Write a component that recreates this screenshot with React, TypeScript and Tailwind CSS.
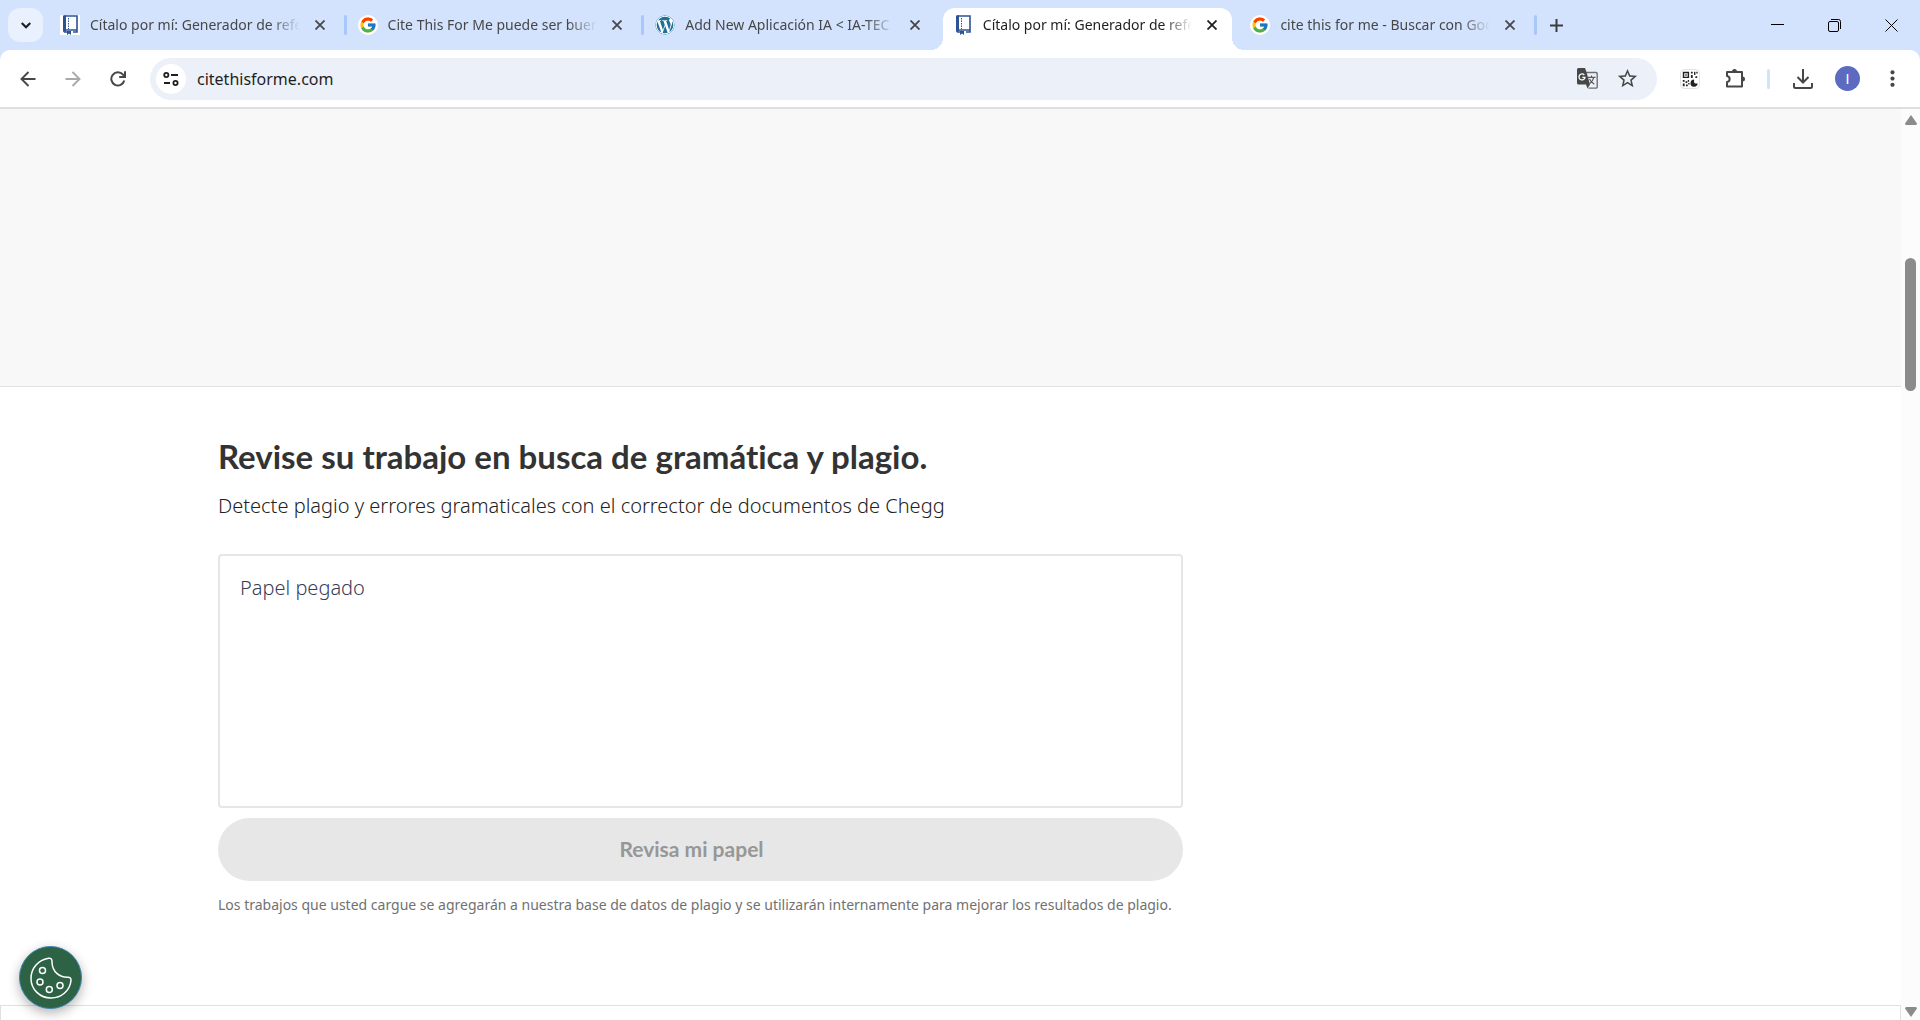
import type { ReactNode } from "react";
import { FaWordpress } from "react-icons/fa";
import { FcGoogle } from "react-icons/fc";
import { MdMoreVert, MdStarOutline } from "react-icons/md";

type Favicon = "book" | "google" | "wordpress";

interface Tab {
  title: string;
  icon: Favicon;
  active?: boolean;
  divider?: boolean;
}

const tabs: Tab[] = [
  { title: "Cítalo por mí: Generador de refe", icon: "book", divider: true },
  { title: "Cite This For Me puede ser buen", icon: "google", divider: true },
  { title: "Add New Aplicación IA < IA-TEC", icon: "wordpress" },
  { title: "Cítalo por mí: Generador de refe", icon: "book", active: true },
  { title: "cite this for me - Buscar con Goo", icon: "google", divider: true },
];

function BookIcon() {
  return (
    <svg viewBox="0 0 20 20" className="size-5">
      <rect width="20" height="20" fill="#fff" />
      <path d="M4 1h13v16h-4M8 17H4.500a1.500 1.500 0 0 1 0-2H17" fill="none" stroke="#2c5494" strokeWidth="1.600" />
      <rect x="3" y="0.500" width="3" height="16" fill="#2c5494" />
      <path d="M8.500 3v11" stroke="#2c5494" strokeWidth="1" strokeDasharray="1.500 1" />
      <path d="M7 16h4v4l-2-1.500L7 20z" fill="#2c5494" />
    </svg>
  );
}

function TabIcon({ icon }: { icon: Favicon }) {
  if (icon === "book") return <BookIcon />;
  if (icon === "wordpress") return <FaWordpress className="size-5 rounded-full bg-white text-[#1d7199]" />;
  return (
    <span className="flex size-5 items-center justify-center rounded-full bg-white">
      <FcGoogle className="size-[18px]" />
    </span>
  );
}

function CloseIcon() {
  return (
    <svg viewBox="0 0 10 10" className="size-[10px]" fill="none" stroke="currentColor" strokeWidth="1.800">
      <path d="M0.500 0.500l9 9M9.500 0.500l-9 9" />
    </svg>
  );
}

function BrowserTab({ tab }: { tab: Tab }) {
  return (
    <div className="flex h-[42px] min-w-0 flex-1 items-center">
      <div
        className={
          tab.active
            ? "relative flex h-full min-w-0 flex-1 items-center rounded-t-xl bg-white px-[10px] pb-2 text-[#1f1f1f]"
            : "flex h-full min-w-0 flex-1 items-center px-[10px] pb-2 text-[#474747]"
        }
      >
        {tab.active && (
          <>
            <span className="absolute bottom-0 -left-3 size-3 bg-[radial-gradient(circle_at_0_0,transparent_12px,white_12px)]" />
            <span className="absolute -right-3 bottom-0 size-3 bg-[radial-gradient(circle_at_100%_0,transparent_12px,white_12px)]" />
          </>
        )}
        <span className="shrink-0">
          <TabIcon icon={tab.icon} />
        </span>
        <span className="ml-[10px] min-w-0 flex-1 overflow-hidden text-[14px] leading-[22px] whitespace-nowrap [mask-image:linear-gradient(to_right,black_86%,transparent)]">
          {tab.title}
        </span>
        <button type="button" aria-label="Cerrar pestaña" className="ml-[10px] flex size-5 items-center justify-center">
          <CloseIcon />
        </button>
      </div>
      <span
        className={tab.divider ? "mr-px mb-2 ml-1 h-5 w-[3px] rounded-full bg-[#a8c7fa]" : "mr-px ml-1 w-[3px]"}
      />
    </div>
  );
}

function WindowButton({ label, children }: { label: string; children: ReactNode }) {
  return (
    <button type="button" aria-label={label} className="flex h-full w-[57px] items-center justify-center text-black">
      <svg viewBox="0 0 13 13" className="size-[13px]" fill="none" stroke="currentColor">
        {children}
      </svg>
    </button>
  );
}

function TabStrip() {
  return (
    <div className="flex h-[50px] items-center bg-[#d3e3fd]">
      <button
        type="button"
        aria-label="Buscar pestañas"
        className="ml-2 flex h-[34px] w-[35px] shrink-0 items-center justify-center rounded-xl bg-[#e9f0fe]"
      >
        <svg viewBox="0 0 10 7" className="h-[7px] w-[10px]" fill="none" stroke="#1f1f1f" strokeWidth="2.200">
          <path d="M0.700 1L5 5.300 9.300 1" />
        </svg>
      </button>
      <div className="ml-[7px] flex w-[1488px] min-w-0 pt-2">
        {tabs.map((tab, i) => (
          <BrowserTab key={i} tab={tab} />
        ))}
      </div>
      <button type="button" aria-label="Nueva pestaña" className="ml-2 flex size-5 shrink-0 items-center justify-center">
        <svg viewBox="0 0 13 13" className="size-[13px]" stroke="#3c3c3c" strokeWidth="2">
          <path d="M6.500 0v13M0 6.500h13" />
        </svg>
      </button>
      <div className="ml-auto flex h-full shrink-0">
        <WindowButton label="Minimizar">
          <path d="M0 5.500h13" />
        </WindowButton>
        <WindowButton label="Restaurar">
          <rect x="0.500" y="2.500" width="10" height="10" rx="1.500" />
          <path d="M3 0.500h7.500a2 2 0 0 1 2 2V10" />
        </WindowButton>
        <WindowButton label="Cerrar">
          <path d="M0.500 0.500l12 12M12.500 0.500l-12 12" />
        </WindowButton>
      </div>
    </div>
  );
}

function TranslateIcon() {
  return (
    <svg viewBox="0 0 21 21" className="size-[21px]" fill="none">
      <path d="M9 4.500h10a1.200 1.200 0 0 1 1.200 1.200v13.200a1.200 1.200 0 0 1-1.200 1.200h-7.500" stroke="#6f6f6f" strokeWidth="1.400" />
      <path d="M1.500 0H8l1.300 3.500L13 16.500 10.500 20.500 9 16.500H1.500A1.500 1.500 0 0 1 0 15V1.500A1.500 1.500 0 0 1 1.500 0z" fill="#474747" />
      <path d="M7.300 7A3 3 0 1 0 8 9.300H5.300" stroke="#fff" strokeWidth="1.300" />
      <path d="M11 9.300h7.500M14.500 7.500v1.800M16.800 9.300q-1 4-4.300 6.500M12.500 11q1.500 3 4.800 5.300" stroke="#5a5a5a" strokeWidth="1.200" />
    </svg>
  );
}

function ToolButton({ label, children }: { label: string; children: ReactNode }) {
  return (
    <button
      type="button"
      aria-label={label}
      className="flex size-[35px] shrink-0 items-center justify-center text-[#474747]"
    >
      {children}
    </button>
  );
}

function Toolbar() {
  return (
    <div className="bg-[#d3e3fd]">
      <div className="flex h-[59px] items-center gap-[10px] rounded-t-[10px] border-b-2 border-[#dedede] bg-white px-[10px]">
        <ToolButton label="Atrás">
          <svg viewBox="0 0 16 16" className="size-4" fill="none" stroke="currentColor" strokeWidth="1.900">
            <path d="M15.500 8H1.500M8.500 1L1.500 8l7 7" />
          </svg>
        </ToolButton>
        <ToolButton label="Adelante">
          <svg viewBox="0 0 16 16" className="size-4" fill="none" stroke="#a9a9a9" strokeWidth="1.900">
            <path d="M0.500 8h14M7.500 1l7 7-7 7" />
          </svg>
        </ToolButton>
        <ToolButton label="Volver a cargar">
          <svg viewBox="0 0 16 16" className="size-4" fill="none" stroke="currentColor" strokeWidth="2">
            <path d="M14.300 9.500A6.600 6.600 0 1 1 13 3.700L14.500 5.500" />
            <path d="M15 0.300V6H9.200" />
          </svg>
        </ToolButton>

        <div className="mx-[5px] flex h-[42px] min-w-0 flex-1 items-center rounded-full bg-[#ecf0f9] px-[6px]">
          <button
            type="button"
            aria-label="Información del sitio"
            className="flex size-[30px] shrink-0 items-center justify-center rounded-full bg-white"
          >
            <svg viewBox="0 0 16 14" className="h-[14px] w-4" fill="none" stroke="#1f1f1f" strokeWidth="1.800">
              <circle cx="3.300" cy="3" r="2.100" />
              <path d="M8 3h7M1 11h6" />
              <circle cx="12.500" cy="11" r="2.100" />
            </svg>
          </button>
          <input
            type="text"
            aria-label="Dirección"
            defaultValue="citethisforme.com"
            className="ml-[11px] min-w-0 flex-1 bg-transparent text-[16px] leading-6 text-[#1f1f1f] outline-none"
          />
          <button type="button" aria-label="Traducir" className="flex w-[35px] justify-center">
            <TranslateIcon />
          </button>
          <button type="button" aria-label="Favoritos" className="mr-[6px] ml-[5px] flex w-[35px] justify-center text-[#474747]">
            <MdStarOutline className="size-[23px]" />
          </button>
        </div>

        <ToolButton label="Código QR">
          <svg viewBox="0 0 20 20" className="size-5 rounded-sm border border-[#e4e4e4] bg-white" fill="#222">
            <path fillRule="evenodd" d="M2 2h7v7H2zM3.600 3.600v3.800h3.800V3.600z" />
            <path d="M4.800 4.800h1.500v1.500H4.800zM11 2h2v2h-2zM11 5.500h2V9h-2zM14.500 2H16v3.500h-1.500zM17 2h1.500v2H17zM16 7h2v2h-2zM2 11h2v2H2zM5 12.500h2v2H5zM7.500 11H9v2H7.500zM2 15h2v3H2zM5.500 16h2v2h-2zM8 14.500h1.500V16H8z" />
            <path d="M14.500 10.500a4 4 0 1 0 4 4.500h-2.500a2 2 0 0 1-1.500-2z" />
          </svg>
        </ToolButton>
        <ToolButton label="Extensiones">
          <svg viewBox="0 0 22 22" className="size-[22px]" fill="none" stroke="currentColor" strokeWidth="2">
            <path d="M3 4h15v14.500H3v-4.500c3.500-0.500 3.500-5.500 0-6z" strokeLinejoin="round" />
            <path d="M8 3.500a2.500 2.500 0 0 1 5 0zM18.500 8.500a2.500 2.500 0 0 1 0 5z" fill="currentColor" stroke="none" />
          </svg>
        </ToolButton>
        <span className="mx-[5px] h-5 w-[3px] shrink-0 rounded-full bg-[#d3e3fd]" />
        <ToolButton label="Descargas">
          <svg viewBox="0 0 20 20" className="size-5" fill="none" stroke="currentColor" strokeWidth="2">
            <path d="M10 0v13M4.500 8l5.500 5.500L15.500 8M1 14v3.500q0 1.500 1.500 1.500h15q1.500 0 1.500-1.500V14" />
          </svg>
        </ToolButton>
        <ToolButton label="Perfil">
          <span className="flex size-[25px] items-center justify-center rounded-full bg-[#5c6bc0] font-[Lato,sans-serif] text-[14px] text-white">
            I
          </span>
        </ToolButton>
        <ToolButton label="Menú">
          <MdMoreVert className="size-[25px]" />
        </ToolButton>
      </div>
    </div>
  );
}

function Scrollbar() {
  return (
    <div className="flex w-[19px] shrink-0 flex-col items-center bg-[#fcfcfc] pt-[6px] pb-[3px]">
      <svg viewBox="0 0 12 10" className="h-[10px] w-3" fill="#8b8b8b">
        <path d="M6 0l6 8.500q0 1.500-1.500 1.500h-9Q0 10 0 8.500z" />
      </svg>
      <span className="mt-[133px] h-[133px] w-[11px] rounded-full bg-[#8b8b8b]" />
      <svg viewBox="0 0 12 10" className="mt-auto h-[10px] w-3" fill="#8b8b8b">
        <path d="M6 10l6-8.500Q12 0 10.500 0h-9Q0 0 0 1.500z" />
      </svg>
    </div>
  );
}

function CookieButton() {
  return (
    <button
      type="button"
      aria-label="Preferencias de cookies"
      className="fixed bottom-[11px] left-[19px] flex size-[63px] items-center justify-center rounded-full border border-[#3f86b0] bg-[#2d6244] shadow-[0_4px_12px_rgba(0,0,0,0.3)]"
    >
      <svg viewBox="0 0 42 42" className="size-[42px]" fill="none" stroke="#fff" strokeWidth="1.500">
        <path d="M18.500 1.200C8 3 1 11.500 1 21.500 1 32.500 10 41 21 41c10.500 0 19-7.500 20-17.500.2-2-1-3.300-3-3.300-9 .3-15.500-5.500-16-14.700V4c0-2-1.300-3.100-3.500-2.800z" />
        <circle cx="12.500" cy="13.500" r="3" />
        <circle cx="10" cy="25" r="3" />
        <circle cx="19.300" cy="32.500" r="3" />
        <circle cx="30" cy="28.500" r="3" />
      </svg>
    </button>
  );
}

function PlagiarismChecker() {
  return (
    <section className="mx-auto w-full max-w-[1465px] pt-[49px] pb-[90px]">
      <div className="w-[965px] max-w-full">
        <h2 className="font-[Lato,sans-serif] text-[33px] leading-10 font-bold text-[#333]">
          Revise su trabajo en busca de gramática y plagio.
        </h2>
        <p className="mt-4 text-[20px] leading-7 font-light text-[#222]">
          Detecte plagio y errores gramaticales con el corrector de documentos de Chegg
        </p>
        <form className="mt-[34px]">
          <textarea
            aria-label="Papel pegado"
            placeholder="Papel pegado"
            className="block h-[254px] w-full resize-none rounded border-2 border-[#e6e6e6] px-5 py-[18px] text-[20px] leading-7 font-light placeholder:text-[#3a3d58]"
          />
          <button
            type="button"
            disabled
            className="mt-[10px] h-[63px] w-full rounded-full bg-[#e7e7e7] pr-[18px] pb-[2px] font-[Lato,sans-serif] text-[21px] leading-7 font-bold text-[#979797]"
          >
            Revisa mi papel
          </button>
        </form>
        <p className="mt-[14px] text-[14px] leading-5 text-[#717171]">
          Los trabajos que usted cargue se agregarán a nuestra base de datos de plagio y se utilizarán internamente para
          mejorar los resultados de plagio.
        </p>
      </div>
    </section>
  );
}

export default function App() {
  return (
    <div className="flex h-screen flex-col overflow-hidden bg-white font-['Noto_Sans',sans-serif]">
      <TabStrip />
      <Toolbar />
      <div className="flex min-h-0 flex-1">
        <main className="flex min-w-0 flex-1 flex-col overflow-hidden [font-variant-ligatures:none]">
          <div className="h-[278px] shrink-0 border-b border-[#e2e2e2] bg-[#f8f8f8]" />
          <PlagiarismChecker />
          <div className="flex-1 border-x border-t border-[#e0e0e0]" />
        </main>
        <Scrollbar />
      </div>
      <CookieButton />
    </div>
  );
}
